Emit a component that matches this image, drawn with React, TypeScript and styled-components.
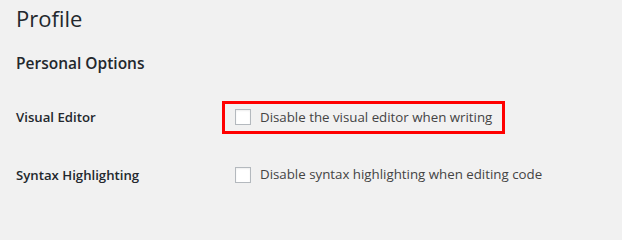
import React from 'react';
import styled, { createGlobalStyle } from 'styled-components';

const GlobalStyle = createGlobalStyle`
  html, body {
    margin: 0;
    padding: 0;
    background: #f1f1f1;
  }
  body {
    font-family: "Open Sans", "Noto Sans", Arial, sans-serif;
    color: #444;
  }
`;

const Page = styled.div`
  padding: 0 16px;
`;

const Title = styled.h1`
  margin: 0;
  padding-top: 4px;
  font-size: 22px;
  font-weight: 400;
  line-height: 29px;
  color: #23282d;
`;

const SectionTitle = styled.h2`
  margin: 19px 0 0;
  font-size: 15.5px;
  font-weight: 600;
  line-height: 22px;
  color: #23282d;
`;

const Table = styled.div`
  display: flex;
  flex-direction: column;
  margin-top: 26.5px;
  gap: 24.5px;
`;

const Row = styled.div`
  display: grid;
  grid-template-columns: 206px 1fr;
  align-items: center;
`;

const RowLabel = styled.div`
  font-size: 13.2px;
  font-weight: 600;
  color: #23282d;
`;

const Option = styled.label<{ highlighted?: boolean }>`
  display: inline-flex;
  align-items: center;
  gap: 9px;
  justify-self: start;
  padding: 5px 10px;
  border: 3px solid ${props => (props.highlighted ? '#f00' : 'transparent')};
  font-size: 13.3px;
  line-height: 17px;
  color: #444;
`;

const Box = styled.span`
  flex: none;
  width: 14px;
  height: 14px;
  border: 1px solid #b4b9be;
  background: #fff;
  box-shadow: inset 0 1px 2px rgba(0, 0, 0, 0.07);
`;

const options = [
  { label: 'Visual Editor', text: 'Disable the visual editor when writing', highlighted: true },
  { label: 'Syntax Highlighting', text: 'Disable syntax highlighting when editing code', highlighted: false },
];

const App: React.FC = () => {
  return (
    <Page>
      <GlobalStyle />
      <Title>Profile</Title>
      <SectionTitle>Personal Options</SectionTitle>
      <Table>
        {options.map(option => (
          <Row key={option.label}>
            <RowLabel>{option.label}</RowLabel>
            <Option highlighted={option.highlighted}>
              <Box />
              {option.text}
            </Option>
          </Row>
        ))}
      </Table>
    </Page>
  );
};

export default App;
